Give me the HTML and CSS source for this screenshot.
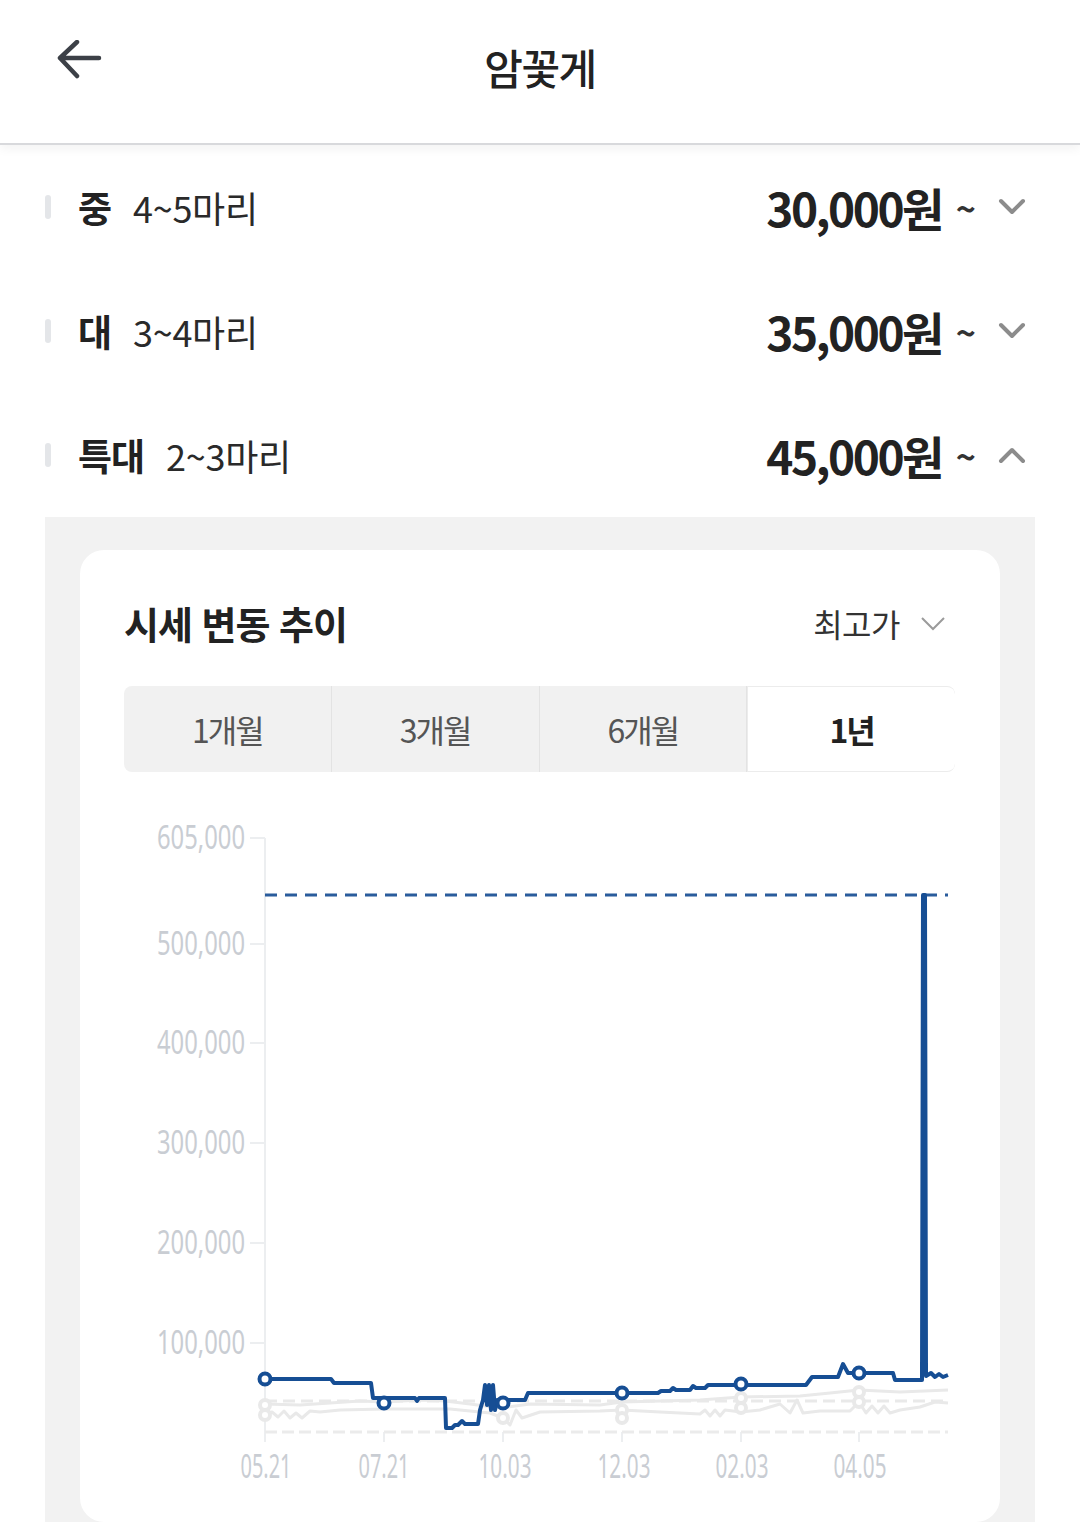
FILE: index.html
```html
<!DOCTYPE html>
<html lang="ko">
<head>
  <meta charset="UTF-8">
  <meta name="viewport" content="width=device-width, initial-scale=1.0">
  <title>암꽃게</title>
  <link rel="stylesheet" href="styles.css">
</head>
<body>
  <header class="topbar">
    <button class="back-btn" aria-label="뒤로">
      <svg width="46" height="40" viewBox="0 0 46 40"><path d="M43 18H4M21 2L4 18L21 36" fill="none" stroke="#3c4047" stroke-width="4.5" stroke-linecap="round" stroke-linejoin="round"/></svg>
    </button>
    <h1 class="title">암꽃게</h1>
    <span></span>
  </header>

  <ul class="size-list">
    <li class="size-row">
      <span class="marker"></span>
      <strong class="size">중</strong>
      <span class="count">4~5마리</span>
      <span class="price">30,000원</span>
      <span class="tilde">~</span>
      <svg class="chev" width="28" height="18" viewBox="0 0 28 18"><path d="M3 3L14 14L25 3" fill="none" stroke="#8c8c8c" stroke-width="4" stroke-linecap="round" stroke-linejoin="round"/></svg>
    </li>
    <li class="size-row">
      <span class="marker"></span>
      <strong class="size">대</strong>
      <span class="count">3~4마리</span>
      <span class="price">35,000원</span>
      <span class="tilde">~</span>
      <svg class="chev" width="28" height="18" viewBox="0 0 28 18"><path d="M3 3L14 14L25 3" fill="none" stroke="#8c8c8c" stroke-width="4" stroke-linecap="round" stroke-linejoin="round"/></svg>
    </li>
    <li class="size-row">
      <span class="marker"></span>
      <strong class="size">특대</strong>
      <span class="count">2~3마리</span>
      <span class="price">45,000원</span>
      <span class="tilde">~</span>
      <svg class="chev" width="28" height="18" viewBox="0 0 28 18"><path d="M3 15L14 4L25 15" fill="none" stroke="#8c8c8c" stroke-width="4" stroke-linecap="round" stroke-linejoin="round"/></svg>
    </li>
  </ul>

  <section class="trend-panel">
    <div class="trend-card">
      <div class="trend-head">
        <h2>시세 변동 추이</h2>
        <div class="sort">최고가
          <svg width="26" height="16" viewBox="0 0 26 16"><path d="M2 3L13 14L24 3" fill="none" stroke="#9b9b9b" stroke-width="2"/></svg>
        </div>
      </div>

      <div class="period-tabs">
        <button>1개월</button>
        <button>3개월</button>
        <button>6개월</button>
        <button class="active">1년</button>
      </div>

      <svg class="chart" width="920" height="722" viewBox="80 800 920 722">
        <!-- axes -->
        <g stroke="#eceef0" stroke-width="2">
          <line x1="265" y1="838" x2="265" y2="1442"/>
          <line x1="250" y1="838" x2="265" y2="838"/>
          <line x1="250" y1="944" x2="265" y2="944"/>
          <line x1="250" y1="1043" x2="265" y2="1043"/>
          <line x1="250" y1="1143" x2="265" y2="1143"/>
          <line x1="250" y1="1243" x2="265" y2="1243"/>
          <line x1="250" y1="1343" x2="265" y2="1343"/>
          <line x1="384" y1="1432" x2="384" y2="1442"/>
          <line x1="503" y1="1432" x2="503" y2="1442"/>
          <line x1="622" y1="1432" x2="622" y2="1442"/>
          <line x1="741" y1="1432" x2="741" y2="1442"/>
          <line x1="859" y1="1432" x2="859" y2="1442"/>
        </g>
        <line x1="265" y1="1432" x2="948" y2="1432" stroke="#ebebeb" stroke-width="3" stroke-dasharray="12 5"/>

        <g class="axis-label">
          <text x="245" y="849" text-anchor="end" textLength="88" lengthAdjust="spacingAndGlyphs">605,000</text>
          <text x="245" y="955" text-anchor="end" textLength="88" lengthAdjust="spacingAndGlyphs">500,000</text>
          <text x="245" y="1054" text-anchor="end" textLength="88" lengthAdjust="spacingAndGlyphs">400,000</text>
          <text x="245" y="1154" text-anchor="end" textLength="88" lengthAdjust="spacingAndGlyphs">300,000</text>
          <text x="245" y="1254" text-anchor="end" textLength="88" lengthAdjust="spacingAndGlyphs">200,000</text>
          <text x="245" y="1354" text-anchor="end" textLength="88" lengthAdjust="spacingAndGlyphs">100,000</text>
          <text x="266" y="1478" text-anchor="middle" textLength="51" lengthAdjust="spacingAndGlyphs">05.21</text>
          <text x="384" y="1478" text-anchor="middle" textLength="51" lengthAdjust="spacingAndGlyphs">07.21</text>
          <text x="505" y="1478" text-anchor="middle" textLength="53" lengthAdjust="spacingAndGlyphs">10.03</text>
          <text x="624" y="1478" text-anchor="middle" textLength="53" lengthAdjust="spacingAndGlyphs">12.03</text>
          <text x="742" y="1478" text-anchor="middle" textLength="53" lengthAdjust="spacingAndGlyphs">02.03</text>
          <text x="860" y="1478" text-anchor="middle" textLength="53" lengthAdjust="spacingAndGlyphs">04.05</text>
        </g>

        <!-- other sizes, faded -->
        <g fill="none" stroke="#e9e9e9" stroke-width="3" stroke-linejoin="round">
          <line x1="265" y1="1401" x2="948" y2="1401" stroke-dasharray="12 6"/>
          <path d="M265 1404 L300 1405 L330 1403 L360 1401 L384 1402 L420 1400 L445 1401 L470 1404 L500 1408 L530 1404 L600 1405 L622 1402 L700 1400 L741 1397 L800 1396 L830 1393 L859 1390 L900 1392 L948 1390"/>
          <path d="M265 1415 L272 1412 L278 1417 L284 1411 L290 1418 L296 1413 L302 1418 L310 1411 L320 1412 L340 1410 L384 1409 L450 1409 L490 1413 L503 1418 L510 1425 L516 1410 L522 1418 L540 1412 L600 1411 L622 1410 L660 1412 L700 1414 L705 1410 L710 1416 L715 1410 L720 1416 L725 1410 L741 1412 L760 1410 L780 1404 L790 1413 L797 1400 L803 1413 L820 1411 L850 1411 L859 1402 L866 1413 L872 1406 L878 1413 L884 1406 L890 1413 L900 1410 L920 1407 L935 1402 L948 1403"/>
          <g stroke-width="4" fill="#fff">
            <circle cx="265" cy="1405" r="5"/>
            <circle cx="265" cy="1415" r="5"/>
            <circle cx="503" cy="1418" r="5"/>
            <circle cx="622" cy="1410" r="5"/>
            <circle cx="622" cy="1418" r="5"/>
            <circle cx="741" cy="1398" r="5"/>
            <circle cx="741" cy="1408" r="5"/>
            <circle cx="859" cy="1392" r="5"/>
            <circle cx="859" cy="1402" r="5"/>
          </g>
        </g>

        <!-- selected size -->
        <line x1="265" y1="895" x2="948" y2="895" stroke="#2a5c9c" stroke-width="3" stroke-dasharray="12 8"/>
        <path fill="none" stroke="#164e94" stroke-width="4" stroke-linejoin="round"
          d="M265 1379 H331 L334 1383 H371 L373 1398 H415 L417 1401 L419 1398 H445 L446 1428 H452 L455 1425 H458 L462 1421 L465 1424 H478 L480 1410 L483 1400 L485 1385 L487 1405 L489 1385 L491 1410 L493 1385 L495 1410 L497 1400 H525 L528 1393 H658 L661 1391 H670 L673 1388 L676 1390 H690 L693 1386 L696 1388 H705 L708 1385 H740 H806 L812 1377 H838 L843 1364 L848 1373 H893 L895 1380 H922 L923 895 H925 L926 1376 L931 1373 L935 1377 L939 1374 L943 1377 L948 1375"/>
        <g fill="#fff" stroke="#164e94" stroke-width="4">
          <circle cx="265" cy="1379" r="5.5"/>
          <circle cx="384" cy="1403" r="5.5"/>
          <circle cx="503" cy="1403" r="5.5"/>
          <circle cx="622" cy="1393" r="5.5"/>
          <circle cx="741" cy="1384" r="5.5"/>
          <circle cx="859" cy="1373" r="5.5"/>
        </g>
      </svg>
    </div>
  </section>
</body>
</html>
```

FILE: styles.css
```css
body {
  margin: 0;
  padding: 0;
  background: #fff;
  color: #222;
  font-family: "Noto Sans CJK KR", "Noto Sans", sans-serif;
}

.topbar {
  display: grid;
  grid-template-columns: 1fr auto 1fr;
  align-items: start;
  height: 143px;
  border-bottom: 2px solid #d8d9dc;
  box-shadow: 0 4px 10px rgba(0, 0, 0, 0.05);
  position: relative;
}

.back-btn {
  justify-self: start;
  margin: 40px 0 0 56px;
  padding: 0;
  border: none;
  background: none;
  line-height: 0;
}

.title {
  margin: 38px 0 0;
  font-size: 42px;
  line-height: 58px;
  font-weight: 500;
  letter-spacing: -1.5px;
  color: #222;
}

.size-list {
  list-style: none;
  margin: 0;
  padding: 0;
}

.size-row {
  display: flex;
  align-items: center;
  height: 124px;
  padding: 0 54px 0 45px;
}

.marker {
  width: 6px;
  height: 24px;
  border-radius: 3px;
  background: #e4e6e9;
  margin-right: 27px;
}

.size {
  font-size: 37px;
  font-weight: 700;
  letter-spacing: -1px;
  margin-right: 22px;
  color: #222;
}

.count {
  font-size: 36px;
  letter-spacing: -0.3px;
  color: #2a2a2a;
}

.price {
  margin-left: auto;
  font-size: 46px;
  font-weight: 700;
  letter-spacing: -2.5px;
  color: #222;
}

.tilde {
  margin-left: 14px;
  font-size: 34px;
  font-weight: 700;
  color: #333;
}

.chev {
  margin-left: 22px;
}

.trend-panel {
  margin: 0 45px;
  padding: 33px 35px 0;
  background: #f2f2f2;
}

.trend-card {
  height: 972px;
  padding: 0 45px 0 44px;
  background: #fff;
  border-radius: 24px;
  overflow: hidden;
}

.trend-head {
  display: flex;
  align-items: center;
  justify-content: space-between;
  padding-top: 50px;
}

.trend-head h2 {
  margin: 0;
  font-size: 38px;
  line-height: 46px;
  font-weight: 700;
  letter-spacing: -1px;
  color: #222;
}

.sort {
  display: flex;
  align-items: center;
  gap: 20px;
  margin-right: 9px;
  font-size: 32px;
  letter-spacing: -0.5px;
  color: #333;
}

.period-tabs {
  display: flex;
  margin-top: 40px;
  height: 86px;
  background: #f1f1f1;
  border-radius: 8px;
  overflow: hidden;
}

.period-tabs button {
  flex: 1;
  border: none;
  border-right: 1px solid #e3e3e3;
  background: none;
  font-family: inherit;
  font-size: 32px;
  letter-spacing: -2px;
  color: #555;
}

.period-tabs button:last-child {
  border-right: none;
}

.period-tabs .active {
  background: #fff;
  font-weight: 700;
  color: #222;
  border: 1px solid #ececec;
  border-radius: 0 8px 8px 0;
}

.chart {
  display: block;
  margin: 28px 0 0 -44px;
}

.axis-label {
  font-family: "Noto Sans", sans-serif;
  font-size: 32px;
  fill: #c9cdd3;
}
```
